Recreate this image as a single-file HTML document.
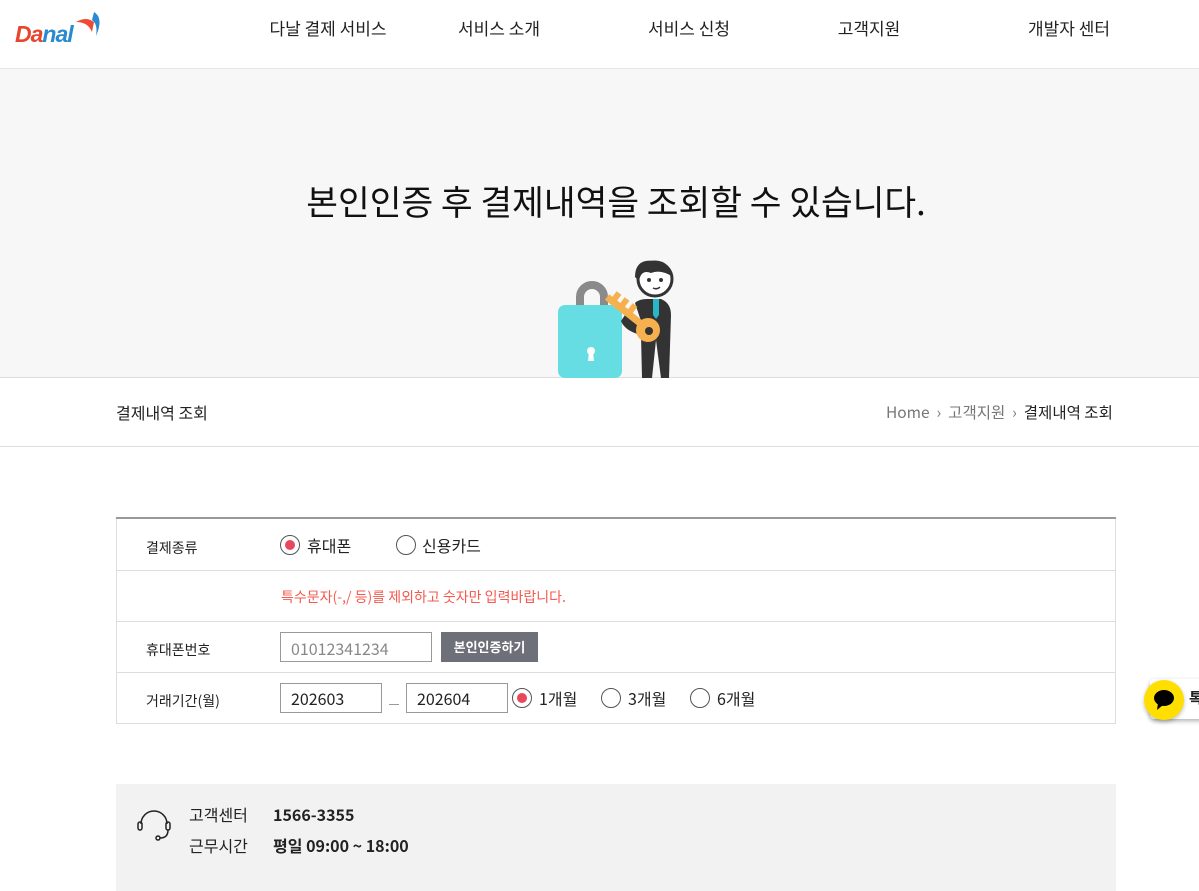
<!DOCTYPE html>
<html><head><meta charset="utf-8"><style>
*{margin:0;padding:0;box-sizing:border-box}
body{width:1199px;height:891px;overflow:hidden;background:#fff;font-family:"Noto Sans CJK KR","Liberation Sans",sans-serif;color:#222;position:relative;line-height:1.2}
.abs{position:absolute}
.nav{font-size:17px;color:#222;top:18px;white-space:nowrap;transform:translateX(-50%)}
.hero{top:68px;left:0;width:1199px;height:310px;background:#f7f7f7;border-top:1px solid #e6e6e6;border-bottom:1px solid #ddd}
.bc{top:379px;height:68px;width:1199px;border-bottom:1px solid #ddd}
.row{left:116px;width:1000px;border-left:1px solid #ddd;border-right:1px solid #ddd;border-bottom:1px solid #ddd}
.lbl{font-size:14px;left:30px}
.radio{width:20px;height:20px;border:1px solid #555;border-radius:50%;background:#fff}
.radio.on::after{content:"";position:absolute;left:4px;top:4px;width:10px;height:10px;border-radius:50%;background:#e8485c}
.inp{height:30px;border:1px solid #999;background:#fff;font-size:16px;padding-left:10px;line-height:28px}
</style></head><body>
<div class="abs" style="left:15px;top:21px;font-size:23px;font-weight:bold;font-style:italic;letter-spacing:-1px;font-family:'Liberation Sans',sans-serif"><span style="color:#e8452f">Da</span><span style="color:#2a8ad0">nal</span></div>
<svg class="abs" style="left:74px;top:8px" width="30" height="28"><path d="M2 14 Q12 8 20 14 L18 24 Q14 14 2 14Z" fill="#ee4a35"/><path d="M20 4 Q30 10 22 28 Q24 16 18 12Z" fill="#2a8ad0"/></svg>
<div class="abs nav" style="left:328px">다날 결제 서비스</div>
<div class="abs nav" style="left:499px">서비스 소개</div>
<div class="abs nav" style="left:689px">서비스 신청</div>
<div class="abs nav" style="left:869px">고객지원</div>
<div class="abs nav" style="left:1069px">개발자 센터</div>
<div class="abs hero"></div>
<div class="abs" style="top:180px;left:0;width:1232px;text-align:center;font-size:34.5px;color:#111">본인인증 후 결제내역을 조회할 수 있습니다.</div>
<svg class="abs" style="left:555px;top:255px" width="125" height="123">
<path d="M25 52 V42 a12 12 0 0 1 24 0 V52" stroke="#8a8a8a" stroke-width="8" fill="none"/>
<rect x="3" y="50" width="64" height="73" rx="7" fill="#66dde2"/>
<circle cx="36" cy="96" r="4" fill="#fff"/><path d="M34 97 L33 106 H39 L38 97Z" fill="#fff"/>
<path d="M80 48 Q84 44 92 44 L106 44 Q116 48 116 60 L114 123 H106 L101 85 L97 123 H87 L86 80 Q70 76 66 66 L70 60 Q80 70 86 66Z" fill="#333"/>
<circle cx="100" cy="24" r="17" fill="#fff" stroke="#333" stroke-width="3"/>
<path d="M80 22 Q80 3 100 6 Q116 8 118 22 Q106 14 96 18 Q86 14 84 26Z" fill="#333"/>
<circle cx="94" cy="25" r="2" fill="#333"/><circle cx="106" cy="25" r="2" fill="#333"/>
<path d="M98 33 Q102 35 105 32" stroke="#333" stroke-width="1.5" fill="none"/>
<path d="M98 44 L104 44 L104 60 L101 64 L98 60Z" fill="#29b6c8"/>
<path d="M52 42 L90 72" stroke="#f6b04e" stroke-width="7"/>
<path d="M58 46 L64 38 M66 52 L72 44 M74 58 L80 50" stroke="#f6b04e" stroke-width="6"/>
<circle cx="93" cy="75" r="12" fill="#f6b04e"/><circle cx="94" cy="76" r="4" fill="#333"/>
</svg>
<div class="abs bc"></div>
<div class="abs" style="left:116px;top:403px;font-size:16px">결제내역 조회</div>
<div class="abs" style="left:886px;top:403px;font-size:15.5px;color:#777">Home &nbsp;›&nbsp; 고객지원 &nbsp;›&nbsp; <span style="color:#222">결제내역 조회</span></div>
<div class="abs" style="left:116px;top:517px;width:1000px;height:2px;background:#999"></div>
<div class="abs row" style="top:519px;height:52px"></div>
<div class="abs row" style="top:571px;height:51px"></div>
<div class="abs row" style="top:622px;height:51px"></div>
<div class="abs row" style="top:673px;height:51px"></div>
<div class="abs lbl" style="left:146px;top:540px">결제종류</div>
<div class="abs radio on" style="left:280px;top:535px"></div><div class="abs" style="left:307px;top:536px;font-size:16px">휴대폰</div>
<div class="abs radio" style="left:396px;top:535px"></div><div class="abs" style="left:422px;top:536px;font-size:16px">신용카드</div>
<div class="abs" style="left:281px;top:589px;font-size:14px;color:#f5594e">특수문자(-,/ 등)를 제외하고 숫자만 입력바랍니다.</div>
<div class="abs lbl" style="left:146px;top:642px">휴대폰번호</div>
<div class="abs inp" style="left:280px;top:632px;width:152px;color:#888;line-height:30px">01012341234</div>
<div class="abs" style="left:441px;top:632px;width:97px;height:30px;background:#6d7078;color:#fff;font-size:13px;font-weight:bold;text-align:center;line-height:30px">본인인증하기</div>
<div class="abs lbl" style="left:146px;top:693px">거래기간(월)</div>
<div class="abs inp" style="left:280px;top:683px;width:102px">202603</div>
<div class="abs" style="left:389px;top:704px;width:10px;height:1px;background:#999"></div>
<div class="abs inp" style="left:406px;top:683px;width:102px">202604</div>
<div class="abs radio on" style="left:512px;top:688px"></div><div class="abs" style="left:539px;top:689px;font-size:16px">1개월</div>
<div class="abs radio" style="left:601px;top:688px"></div><div class="abs" style="left:628px;top:689px;font-size:16px">3개월</div>
<div class="abs radio" style="left:690px;top:688px"></div><div class="abs" style="left:717px;top:689px;font-size:16px">6개월</div>
<div class="abs" style="left:116px;top:784px;width:1000px;height:107px;background:#f2f2f2"></div>
<svg class="abs" style="left:136px;top:808px" width="36" height="36"><path d="M5 16 a13 13 0 0 1 26 0" stroke="#222" stroke-width="1.5" fill="none"/><rect x="2" y="14" width="4" height="8" rx="2" fill="none" stroke="#222" stroke-width="1.5"/><rect x="30" y="14" width="4" height="8" rx="2" fill="none" stroke="#222" stroke-width="1.5"/><path d="M32 22 Q32 30 24 30" stroke="#222" stroke-width="1.5" fill="none"/><circle cx="22" cy="30" r="2" fill="none" stroke="#222" stroke-width="1.5"/></svg>
<div class="abs" style="left:189px;top:805px;font-size:16px">고객센터</div>
<div class="abs" style="left:273px;top:805px;font-size:16px;font-weight:bold">1566-3355</div>
<div class="abs" style="left:189px;top:836px;font-size:16px">근무시간</div>
<div class="abs" style="left:273px;top:836px;font-size:16px;font-weight:bold">평일 09:00 ~ 18:00</div>
<div class="abs" style="left:1150px;top:679px;width:60px;height:40px;background:#fff;box-shadow:0 2px 5px rgba(0,0,0,.3);border-radius:4px"></div>
<div class="abs" style="left:1144px;top:680px;width:40px;height:40px;border-radius:50%;background:#ffde00;box-shadow:0 2px 4px rgba(0,0,0,.25)"></div>
<svg class="abs" style="left:1152px;top:688px" width="24" height="24"><ellipse cx="12" cy="10" rx="10" ry="8" fill="#000"/><path d="M6 15 L5 22 L11 17Z" fill="#000"/></svg>
<div class="abs" style="left:1189px;top:689px;font-size:15px;font-weight:bold">톡</div>
</body></html>
